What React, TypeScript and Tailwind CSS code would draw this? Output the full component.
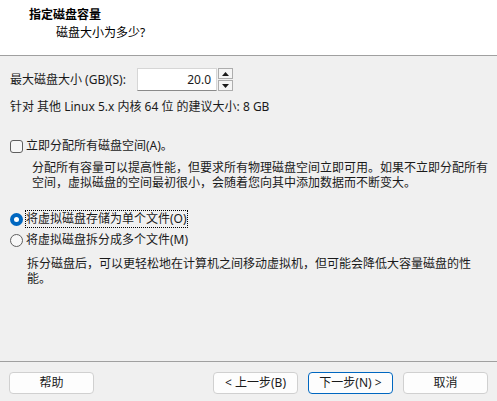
import React from 'react';

function SpinArrow({ up }: { up?: boolean }) {
  return (
    <svg width="7" height="4" viewBox="0 0 7 4" className="block">
      {up ? <path d="M0 4 L3.5 0 L7 4 Z" fill="#1a1a1a" /> : <path d="M0 0 L3.5 4 L7 0 Z" fill="#1a1a1a" />}
    </svg>
  );
}

function Button({ label, primary }: { label: string; primary?: boolean }) {
  return (
    <button
      className={
        'h-[22px] w-[85px] rounded-[4px] bg-[#fdfdfd] text-[12px] leading-[20px] text-[#1a1a1a] ' +
        (primary ? 'border border-[#0067c0]' : 'border border-[#d0d0d0]')
      }
    >
      {label}
    </button>
  );
}

export default function App() {
  return (
    <div className="w-[497px] h-[401px] bg-[#f0f0f0] text-[12px] text-[#1a1a1a] font-['Noto_Sans','Noto_Sans_CJK_SC',sans-serif] overflow-hidden">
      {/* header */}
      <div className="h-[56px] bg-white border-b border-[#a0a0a0] pl-[29px] pt-[7px]">
        <div className="font-bold leading-[16px] text-black">指定磁盘容量</div>
        <div className="pl-[27px] mt-[2px] leading-[16px] text-black">磁盘大小为多少?</div>
      </div>

      {/* body */}
      <div className="h-[305px] pl-[10px] pt-[12px]">
        <div className="flex items-center">
          <span className="w-[127px] leading-[16px] whitespace-nowrap">最大磁盘大小 (GB)(S):</span>
          <div className="h-[23px] w-[80px] bg-white border border-[#d6d6d6] border-b-[#8a8a8a] flex items-center justify-end pr-[5px]">
            20.0
          </div>
          <div className="ml-[1px] h-[23px] w-[15px] flex flex-col gap-[1px]">
            <div className="flex-1 border border-[#adadad] bg-[#f5f5f5] flex items-center justify-center">
              <SpinArrow up />
            </div>
            <div className="flex-1 border border-[#adadad] bg-[#f5f5f5] flex items-center justify-center">
              <SpinArrow />
            </div>
          </div>
        </div>

        <div className="mt-[8px] leading-[16px] whitespace-nowrap">针对 其他 Linux 5.x 内核 64 位 的建议大小: 8 GB</div>

        <div className="mt-[23px] flex items-center h-[16px]">
          <span className="w-[13px] h-[13px] rounded-[3px] border border-[#5f5f5f] bg-[#f7f7f7]" />
          <span className="ml-[3px] leading-[16px]">立即分配所有磁盘空间(A)。</span>
        </div>
        <div className="mt-[6px] pl-[22px] leading-[15px] whitespace-nowrap">
          <div>分配所有容量可以提高性能，但要求所有物理磁盘空间立即可用。如果不立即分配所有</div>
          <div>空间，虚拟磁盘的空间最初很小，会随着您向其中添加数据而不断变大。</div>
        </div>

        <div className="mt-[19px] flex items-center h-[20px]">
          <span className="w-[13px] h-[13px] rounded-full bg-[#0067c0] flex items-center justify-center">
            <span className="w-[5px] h-[5px] rounded-full bg-white" />
          </span>
          <span className="ml-[2px] px-[1px] leading-[18px] outline outline-1 outline-dotted outline-black -outline-offset-1">
            将虚拟磁盘存储为单个文件(O)
          </span>
        </div>
        <div className="mt-[3px] flex items-center h-[16px]">
          <span className="w-[13px] h-[13px] rounded-full border border-[#5f5f5f] bg-[#f7f7f7]" />
          <span className="ml-[3px] leading-[16px]">将虚拟磁盘拆分成多个文件(M)</span>
        </div>
        <div className="mt-[8px] pl-[17px] leading-[15px] whitespace-nowrap">
          <div>拆分磁盘后，可以更轻松地在计算机之间移动虚拟机，但可能会降低大容量磁盘的性</div>
          <div>能。</div>
        </div>
      </div>

      {/* footer */}
      <div className="h-[40px] border-t border-[#a0a0a0] pt-[10px] pl-[9px] pr-[9px] flex">
        <Button label="帮助" />
        <div className="flex-1" />
        <div className="flex gap-[10px]">
          <Button label="< 上一步(B)" />
          <Button label="下一步(N) >" primary />
          <Button label="取消" />
        </div>
      </div>
    </div>
  );
}
